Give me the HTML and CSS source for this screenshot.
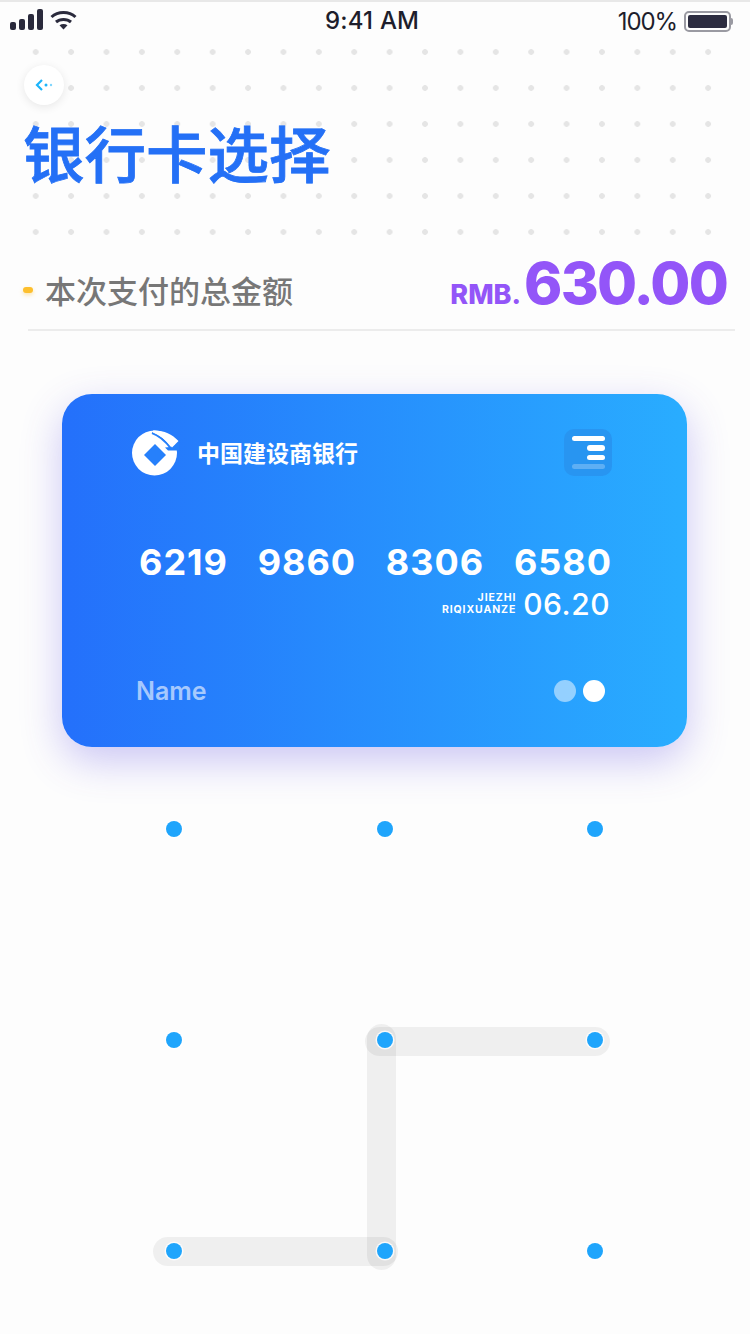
FILE: index.html
```html
<!DOCTYPE html>
<html lang="zh">
<head>
    <meta charset="UTF-8">
    <meta name="viewport" content="width=device-width, initial-scale=1.0">
    <title>银行卡选择</title>
    <link rel="stylesheet" href="styles.css">
</head>
<body>
    <div class="status-bar">
        <div class="status-left">
            <svg width="34" height="22" viewBox="0 0 34 22">
                <rect x="0" y="13" width="6" height="8" rx="2" fill="#2a2a3c"/>
                <rect x="9" y="10" width="6" height="11" rx="2" fill="#2a2a3c"/>
                <rect x="18" y="5" width="6" height="16" rx="2" fill="#2a2a3c"/>
                <rect x="27" y="0" width="6" height="21" rx="2" fill="#2a2a3c"/>
            </svg>
            <svg width="27" height="20" viewBox="0 0 27 20" fill="none" stroke="#2a2a3c" stroke-width="3">
                <path d="M1.5 7 C8 1 19 1 25.5 7"/>
                <path d="M6 12 C10 8.500 17 8.500 21 12"/>
                <path d="M13.500 19.500 L9.500 15.300 C12 13.700 15 13.700 17.500 15.300 Z" fill="#2a2a3c" stroke="none"/>
            </svg>
        </div>
        <div class="status-time">9:41 AM</div>
        <div class="status-right">
            <span class="status-battery-text">100%</span>
            <div class="battery"><div class="battery-fill"></div></div>
            <div class="battery-tip"></div>
        </div>
    </div>

    <div class="hero">
        <div class="dot-field"></div>
        <button class="back-btn">
            <svg width="18" height="14" viewBox="0 0 18 14" fill="none">
                <path d="M7 2 L2 7 L7 12" stroke="#1cb4fb" stroke-width="2.200"/>
                <circle cx="11" cy="7" r="1.500" fill="#1cb4fb"/>
                <circle cx="16" cy="7" r="1.200" fill="#7fd6fd"/>
            </svg>
        </button>
        <h1 class="page-title">银行卡选择</h1>
    </div>

    <div class="total-row">
        <div class="total-label">
            <span class="total-mark"></span>
            <span>本次支付的总金额</span>
        </div>
        <div class="total-amount"><span class="currency">RMB.</span>630.00</div>
    </div>

    <div class="bank-card">
        <div class="card-top">
            <div class="bank-info">
                <svg class="bank-logo" width="47" height="47" viewBox="0 0 47 47">
                    <circle cx="22.500" cy="24" r="22.500" fill="#fff"/>
                    <path d="M23 15 L34 26 L23 37 L12 26 Z" fill="#2680fb"/>
                    <path d="M38 18 L47 13 L47 21.500 L36 21.500 L33 18.500 Z" fill="#2680fb"/>
                    <path d="M20 4 C27 6.500 33 11.500 38.500 19" fill="none" stroke="#2680fb" stroke-width="2"/>
                    <path d="M21 1.500 C31 1 40 5 46.500 12 L40 18.500 C34 11 28 6.500 21 3.500 Z" fill="#fff"/>
                </svg>
                <span class="bank-name">中国建设商银行</span>
            </div>
            <div class="chip">
                <span class="chip-bar"></span>
                <span class="chip-bar short"></span>
                <span class="chip-bar short"></span>
                <span class="chip-bar faint"></span>
            </div>
        </div>
        <div class="card-number">
            <span>6219</span><span>9860</span><span>8306</span><span>6580</span>
        </div>
        <div class="card-expiry">
            <div class="expiry-label">JIEZHI<br>RIQIXUANZE</div>
            <div class="expiry-date">06.20</div>
        </div>
        <div class="card-bottom">
            <span class="holder">Name</span>
            <div class="card-brand">
                <span class="brand-dot faded"></span>
                <span class="brand-dot"></span>
            </div>
        </div>
    </div>

    <div class="lock">
        <svg class="lock-trail" width="750" height="587" viewBox="0 0 750 587">
            <rect x="365" y="280" width="245" height="29" rx="14.500"/>
            <rect x="367" y="277" width="29" height="246" rx="14.500"/>
            <rect x="153" y="490" width="245" height="29" rx="14.500"/>
        </svg>
        <div class="lock-grid">
            <span class="lock-dot"></span><span class="lock-dot"></span><span class="lock-dot"></span>
            <span class="lock-dot"></span><span class="lock-dot"></span><span class="lock-dot"></span>
            <span class="lock-dot"></span><span class="lock-dot"></span><span class="lock-dot"></span>
        </div>
    </div>
</body>
</html>
```

FILE: styles.css
```css
* {
    box-sizing: border-box;
}
body {
    margin: 0;
    width: 750px;
    height: 1334px;
    overflow: hidden;
    background: #fdfdfd;
    font-family: Inter, "Noto Sans CJK SC", sans-serif;
}
.status-bar {
    height: 40px;
    padding: 0 17px 0 10px;
    border-top: 2px solid #e8e8e8;
    display: flex;
    align-items: center;
    justify-content: space-between;
    color: #1e1e2c;
    font-size: 24px;
    position: relative;
}
.status-left {
    display: flex;
    align-items: center;
    gap: 6px;
    margin-top: -3px;
}
.status-time {
    font-weight: 500;
    position: absolute;
    left: 325px;
    top: 4px;
    letter-spacing: 0.200px;
}
.status-right {
    display: flex;
    align-items: center;
}
.status-battery-text {
    letter-spacing: -1.100px;
}
.battery {
    width: 47px;
    height: 21px;
    margin-left: 7px;
    padding: 2px;
    border: 2px solid #9a9aa2;
    border-radius: 5px;
}
.battery-fill {
    height: 100%;
    background: #2c2c40;
    border-radius: 2px;
}
.battery-tip {
    width: 2px;
    height: 7px;
    background: #9a9aa2;
    border-radius: 0 2px 2px 0;
}
.hero {
    height: 205px;
    padding: 23px 0 0 22px;
    position: relative;
}
.dot-field {
    position: absolute;
    left: 18px;
    top: -6px;
    width: 708px;
    height: 216px;
    background-image: radial-gradient(circle, #e5e5e5 2.500px, rgba(229, 229, 229, 0) 3.200px);
    background-size: 35.4px 36px;
}
.back-btn {
    display: flex;
    align-items: center;
    justify-content: center;
    width: 40px;
    height: 40px;
    margin: 2px 0 0 2px;
    padding: 0;
    border: none;
    border-radius: 50%;
    background: #fff;
    box-shadow: 0 2px 10px rgba(0, 0, 0, 0.09);
    position: relative;
}
.page-title {
    margin: 5px 0 0 1px;
    font-family: "Noto Sans CJK SC", sans-serif;
    font-size: 61.500px;
    line-height: 84px;
    font-weight: 500;
    -webkit-text-stroke: 0.800px #2470f6;
    color: #2470f6;
    position: relative;
}
.total-row {
    margin: 0 15px 0 28px;
    height: 86px;
    border-bottom: 2px solid #ececec;
    display: flex;
    align-items: center;
    justify-content: space-between;
}
.total-label {
    display: flex;
    align-items: center;
    gap: 12px;
    margin: 4px 0 0 -5px;
    font-family: "Noto Sans CJK SC", sans-serif;
    font-size: 31px;
    font-weight: 500;
    color: #777;
}
.total-mark {
    width: 10px;
    height: 6px;
    margin-top: 2px;
    border-radius: 3px;
    background: #fdbf2d;
    box-shadow: 0 2px 4px rgba(253, 191, 45, 0.4);
}
.total-amount {
    margin: -8px 8px 0 0;
    font-size: 58px;
    font-weight: 800;
    letter-spacing: -1.800px;
    color: #9355f8;
    display: flex;
    align-items: baseline;
    gap: 3px;
}
.currency {
    font-size: 27px;
    letter-spacing: 0;
}
.bank-card {
    width: 625px;
    height: 353px;
    margin: 63px 0 0 62px;
    padding: 35px 75px 0 70px;
    border-radius: 30px;
    background: linear-gradient(90deg, #2470fb 0%, #29adff 100%);
    box-shadow: 0 14px 40px rgba(85, 70, 225, 0.3);
    color: #fff;
}
.card-top {
    display: flex;
    align-items: center;
    justify-content: space-between;
}
.bank-info {
    display: flex;
    align-items: center;
    gap: 18px;
}
.bank-name {
    margin-top: -2px;
    font-family: "Noto Sans CJK SC", sans-serif;
    font-size: 23px;
    font-weight: 700;
}
.chip {
    width: 48px;
    height: 47px;
    padding: 7px;
    border-radius: 10px;
    background: #2895f1;
    display: flex;
    flex-direction: column;
    align-items: flex-end;
    gap: 4px;
}
.chip-bar {
    width: 33px;
    height: 6px;
    border-radius: 3px;
    background: #fff;
}
.chip-bar.short {
    width: 18px;
}
.chip-bar.faint {
    background: rgba(255, 255, 255, 0.25);
}
.card-number {
    margin: 64px 0 0 7px;
    display: flex;
    justify-content: space-between;
    font-size: 36px;
    font-weight: 700;
    line-height: 44px;
    letter-spacing: 1px;
}
.card-expiry {
    display: flex;
    justify-content: flex-end;
    align-items: center;
    gap: 7px;
    margin-top: 2px;
    padding-right: 2px;
}
.expiry-label {
    font-size: 10.500px;
    font-weight: 700;
    line-height: 12px;
    text-align: right;
    letter-spacing: 0.900px;
}
.expiry-date {
    font-size: 30px;
    font-weight: 500;
    line-height: 36px;
    letter-spacing: 0.500px;
}
.card-bottom {
    margin-top: 54px;
    display: flex;
    align-items: center;
    justify-content: space-between;
    padding-right: 7px;
}
.holder {
    margin-left: 4px;
    font-size: 25px;
    font-weight: 600;
    color: rgba(255, 255, 255, 0.6);
}
.card-brand {
    display: flex;
    gap: 7px;
}
.brand-dot {
    width: 22px;
    height: 22px;
    border-radius: 50%;
    background: #fff;
}
.brand-dot.faded {
    background: rgba(255, 255, 255, 0.5);
}
.lock {
    height: 587px;
    position: relative;
}
.lock-trail {
    position: absolute;
    left: 0;
    top: 0;
}
.lock-trail rect {
    fill: rgba(0, 0, 0, 0.055);
}
.lock-grid {
    position: relative;
    padding: 74px 0 0 166px;
    display: grid;
    grid-template-columns: repeat(3, 16px);
    grid-auto-rows: 16px;
    column-gap: 194.500px;
    row-gap: 195px;
}
.lock-dot {
    width: 16px;
    height: 16px;
    border-radius: 50%;
    background: #1fa5fc;
    box-shadow: 0 0 0 1.500px rgba(255, 255, 255, 0.8);
}
```
